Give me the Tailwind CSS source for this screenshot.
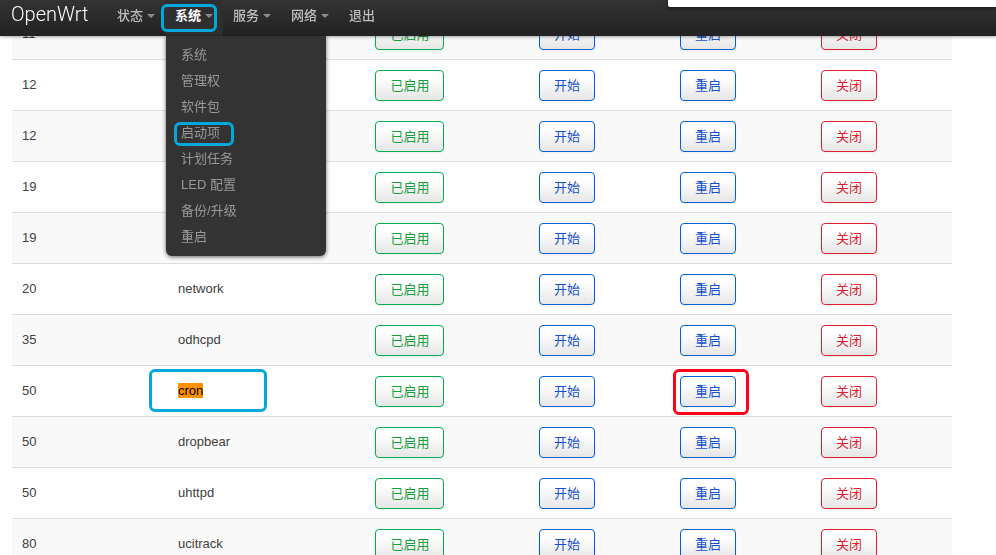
<!DOCTYPE html>
<html lang="zh-CN">
<head>
<meta charset="utf-8">
<title>OpenWrt - 启动项</title>
<script src="https://cdn.jsdelivr.net/npm/@tailwindcss/browser@4"></script>
</head>
<body class="h-screen overflow-hidden bg-white font-['Liberation_Sans','Noto_Sans_CJK_SC',sans-serif] text-[13px] leading-[18px] text-[#404040]">
<header class="fixed inset-x-0 top-0 z-10 flex h-9 bg-linear-to-b from-[#333] to-[#222] pl-[11px] shadow-[0_1px_3px_rgba(0,0,0,0.35)]">
  <a href="#" class="w-24 shrink-0 font-[Roboto,sans-serif] text-[20px] leading-[28px] font-light text-white">OpenWrt</a>
  <nav>
    <ul class="flex h-9 font-medium text-[#bfbfbf]">
      <li><a href="#" class="flex h-9 items-center gap-1 px-[10px] pb-1">状态<svg class="h-1 w-2 fill-[#8c8c8c]" viewBox="0 0 8 4"><path d="M0 0h8L4 4z"/></svg></a></li>
      <li class="relative bg-[#2f2f2f]">
        <a href="#" class="flex h-9 items-center gap-1 px-[10px] pb-1 font-bold text-white">系统<svg class="h-1 w-2 fill-[#8c8c8c]" viewBox="0 0 8 4"><path d="M0 0h8L4 4z"/></svg></a>
        <span class="pointer-events-none absolute top-1 -left-1 h-7 w-14 rounded-md border-3 border-[#00a8dc]"></span>
        <ul class="absolute top-9 left-px w-40 rounded-b-md bg-[#333] py-[6px] font-normal text-[#999] shadow-[0_1px_4px_rgba(0,0,0,0.6)]">
          <li><a href="#" class="block px-[15px] py-1 leading-[18px]">系统</a></li>
          <li><a href="#" class="block px-[15px] py-1 leading-[18px]">管理权</a></li>
          <li><a href="#" class="block px-[15px] py-1 leading-[18px]">软件包</a></li>
          <li class="relative"><a href="#" class="block px-[15px] py-1 leading-[18px]">启动项</a><span class="pointer-events-none absolute top-[2px] left-2 h-6 w-15 rounded-md border-3 border-[#00a8dc]"></span></li>
          <li><a href="#" class="block px-[15px] py-1 leading-[18px]">计划任务</a></li>
          <li><a href="#" class="block px-[15px] py-1 leading-[18px]">LED 配置</a></li>
          <li><a href="#" class="block px-[15px] py-1 leading-[18px]">备份/升级</a></li>
          <li><a href="#" class="block px-[15px] py-1 leading-[18px]">重启</a></li>
        </ul>
      </li>
      <li><a href="#" class="flex h-9 items-center gap-1 px-[10px] pb-1">服务<svg class="h-1 w-2 fill-[#8c8c8c]" viewBox="0 0 8 4"><path d="M0 0h8L4 4z"/></svg></a></li>
      <li><a href="#" class="flex h-9 items-center gap-1 px-[10px] pb-1">网络<svg class="h-1 w-2 fill-[#8c8c8c]" viewBox="0 0 8 4"><path d="M0 0h8L4 4z"/></svg></a></li>
      <li><a href="#" class="flex h-9 items-center px-[10px] pb-1">退出</a></li>
    </ul>
  </nav>
  <div class="absolute top-0 right-0 left-[668px] h-[7px] rounded-bl-xs bg-white shadow-[0_1px_4px_rgba(0,0,0,0.6)]"></div>
</header>
<main class="pt-2 pr-11 pl-3">
  <table class="w-full table-fixed border-separate border-spacing-0">
    <colgroup>
      <col class="w-[16.6%]"><col class="w-[21%]"><col class="w-[17.4%]"><col class="w-[15%]"><col class="w-[15%]"><col class="w-[15%]">
    </colgroup>
    <tbody id="services"></tbody>
  </table>
</main>
<script>
  const services = [
    [11, ''], [12, ''], [12, ''], [19, ''], [19, ''],
    [20, 'network'], [35, 'odhcpd'], [50, 'cron'], [50, 'dropbear'], [50, 'uhttpd'], [80, 'ucitrack']
  ];
  const cell = 'relative h-[51px] border-t border-[#ddd] px-[10px] align-middle';
  const button = 'block h-[31px] cursor-pointer rounded-sm border bg-linear-to-b from-white from-25% to-[#e6e6e6] px-[14px] pt-[2px] leading-[18px] shadow-[0_1px_2px_rgba(0,0,0,0.05)]';
  const actions = [
    ['已启用', 'border-[#00b050] text-[#18a03c]'],
    ['开始', 'border-[#0060d8] text-[#1450d0]'],
    ['重启', 'border-[#0060d8] text-[#1450d0]'],
    ['关闭', 'border-[#e02030] text-[#d82030]']
  ];
  document.getElementById('services').innerHTML = services.map(([order, name]) => {
    const marked = name === 'cron';
    const label = marked
      ? '<mark class="bg-[#ff9200] text-black">cron</mark><span class="pointer-events-none absolute top-[3px] -left-[19px] h-[43px] w-[118px] rounded-md border-3 border-[#00a8dc]"></span>'
      : name;
    const buttons = actions.map(([text, color]) => {
      const ring = marked && text === '重启'
        ? '<span class="pointer-events-none absolute top-[3px] left-[3px] h-[46px] w-[76px] rounded-md border-3 border-[#ff0018]"></span>'
        : '';
      return `<td class="${cell}"><button type="button" class="${button} ${color}">${text}</button>${ring}</td>`;
    }).join('');
    return `<tr class="odd:bg-[#f9f9f9]"><td class="${cell}">${order}</td><td class="${cell}">${label}</td>${buttons}</tr>`;
  }).join('');
</script>
</body>
</html>
